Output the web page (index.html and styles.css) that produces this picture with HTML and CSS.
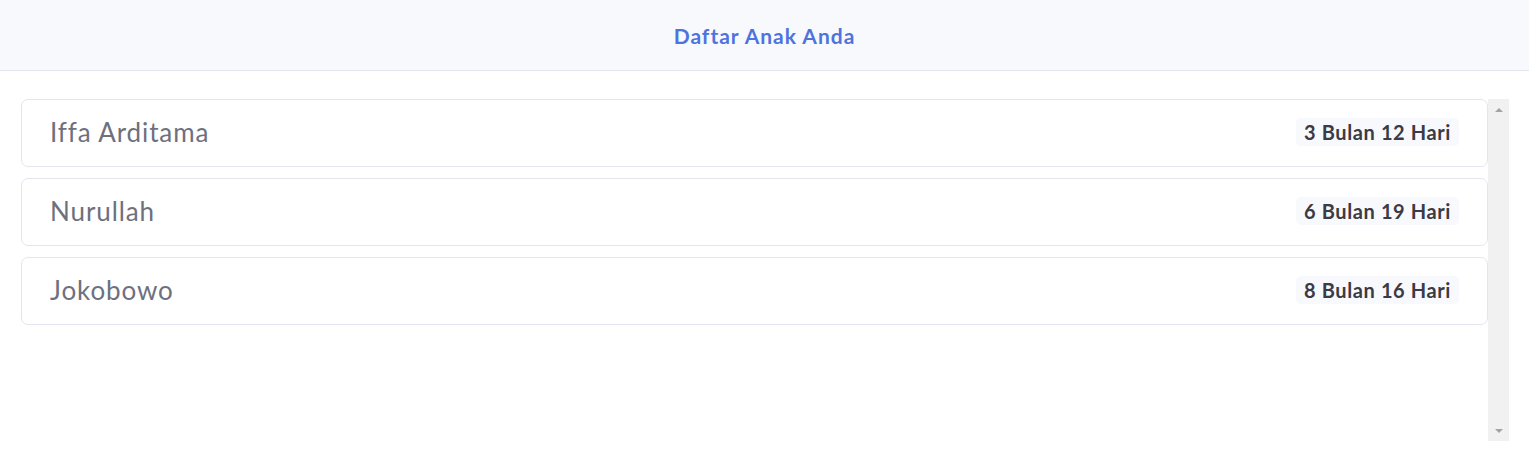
FILE: index.html
```html
<!DOCTYPE html>
<html>
<head>
<meta charset="utf-8">
<link rel="stylesheet" href="styles.css">
</head>
<body>
<header class="header"><h1 class="title">Daftar Anak Anda</h1></header>
<main class="content">
  <div class="scroller">
    <ul class="list">
      <li class="item"><span class="name">Iffa Arditama</span><span class="badge">3 Bulan 12 Hari</span></li>
      <li class="item"><span class="name">Nurullah</span><span class="badge">6 Bulan 19 Hari</span></li>
      <li class="item"><span class="name">Jokobowo</span><span class="badge">8 Bulan 16 Hari</span></li>
    </ul>
    <div class="scrollbar">
      <span class="arrow up"></span>
      <span class="arrow down"></span>
    </div>
  </div>
</main>
</body>
</html>
```
FILE: styles.css
```css
html, body { margin: 0; padding: 0; background: #fff; }
body { font-family: "Lato", "Open Sans", sans-serif; }
.header {
  height: 70px;
  background: #f8f9fc;
  border-bottom: 1px solid #e3e6f0;
  display: flex;
  align-items: center;
  justify-content: center;
}
.title {
  margin: 0;
  font-size: 21px;
  font-weight: 700;
  color: #4e73df;
  letter-spacing: 1px;
}
.content { padding: 28px 20px 0 20px; }
.scroller { display: flex; height: 342px; }
.list {
  list-style: none;
  margin: 0;
  padding: 0 0 0 1px;
  flex: 1;
  display: flex;
  flex-direction: column;
  gap: 11px;
}
.item {
  display: flex;
  align-items: center;
  justify-content: space-between;
  height: 63px;
  border: 1px solid #e3e6f0;
  border-radius: 7px;
  padding: 0 28px 3px 28px;
  box-sizing: content-box;
}
.name { font-size: 26px; color: #6e707e; letter-spacing: 0.9px; }
.badge {
  font-size: 20px;
  font-weight: 700;
  color: #3a3b45;
  background: #f8f9fc;
  padding: 2px 8px;
  border-radius: 5px;
  letter-spacing: 0.6px;
}
.scrollbar {
  width: 21px;
  background: #f1f1f1;
  display: flex;
  flex-direction: column;
  justify-content: space-between;
  align-items: center;
  padding: 9px 0 8px 0;
  box-sizing: border-box;
}
.arrow { width: 0; height: 0; border-left: 4px solid transparent; border-right: 4px solid transparent; }
.arrow.up { border-bottom: 4px solid #a3a3a3; }
.arrow.down { border-top: 4px solid #a3a3a3; }
```
